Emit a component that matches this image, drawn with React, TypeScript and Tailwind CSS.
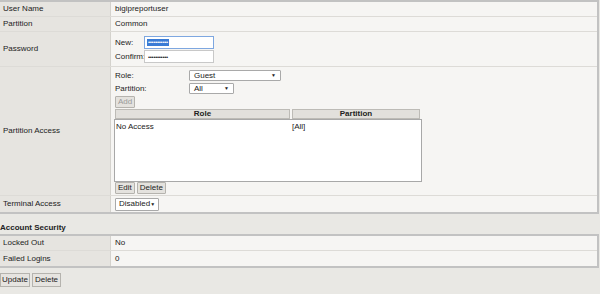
import React from "react";

const Sel = ({ w, label, h = "h-[11px]", pl = "pl-[4px]" }: { w: string; label: string; h?: string; pl?: string }) => (
  <div className={`${w} ${h} ${pl} bg-white border border-[#a9a9a9] flex items-center justify-between pr-[4px] rounded-[1px]`}>
    <span>{label}</span>
    <span className="text-[5px]">▼</span>
  </div>
);

const Btn = ({ label, disabled }: { label: string; disabled?: boolean }) => (
  <div className={`h-[12px] px-[2px] flex items-center border border-[#b5b3ae] bg-[#e4e2de] rounded-[1px] ${disabled ? "text-[#9a9a9a]" : ""}`}>{label}</div>
);

export default function App() {
  return (
    <div
      className="w-[600px] h-[294px] bg-[#e9e8e4] text-[#222] text-[8px] leading-none overflow-hidden"
      style={{ fontFamily: '"Liberation Sans", Arial, sans-serif' }}
    >
      <div className="w-[599px] border-t-2 border-r-2 border-b-2 border-[#c2c2c2]">
        {/* User Name */}
        <div className="flex h-[15px] border-b border-[#dddbd7]">
          <div className="w-[111px] bg-[#e6e4e0] border-r border-[#d4d2cd] flex items-center pl-[3px]">User Name</div>
          <div className="flex-1 bg-[#f6f5f3] flex items-center pl-[4px]">bigipreportuser</div>
        </div>
        {/* Partition */}
        <div className="flex h-[15px] border-b border-[#dddbd7]">
          <div className="w-[111px] bg-[#e6e4e0] border-r border-[#d4d2cd] flex items-center pl-[3px]">Partition</div>
          <div className="flex-1 bg-[#f6f5f3] flex items-center pl-[4px]">Common</div>
        </div>
        {/* Password */}
        <div className="flex h-[35px] border-b border-[#dddbd7]">
          <div className="w-[111px] bg-[#e6e4e0] border-r border-[#d4d2cd] flex items-center pl-[3px]">Password</div>
          <div className="flex-1 bg-[#f6f5f3] flex flex-col pl-[4px] pt-[4px] gap-[1px]">
            <div className="flex items-center h-[13px]">
              <span className="w-[29px]">New:</span>
              <div className="w-[70px] h-[13px] bg-white border border-[#7ea7e0] flex items-center pl-[2px]">
                <span className="bg-[#3a7bd5] text-white text-[6px] leading-[7px] tracking-[-0.3px] px-[1px]">•••••••••••</span>
              </div>
            </div>
            <div className="flex items-center h-[13px]">
              <span className="w-[29px]">Confirm:</span>
              <div className="w-[70px] h-[13px] bg-white border border-[#c8c8c8] flex items-center pl-[3px]">
                <span className="text-[6px] tracking-[-0.3px]">•••••••••••</span>
              </div>
            </div>
          </div>
        </div>
        {/* Partition Access */}
        <div className="flex h-[129px] border-b border-[#dddbd7]">
          <div className="w-[111px] bg-[#e6e4e0] border-r border-[#d4d2cd] flex items-center pl-[3px]">Partition Access</div>
          <div className="flex-1 bg-[#f6f5f3] flex flex-col pl-[3px] pt-[3px]">
            <div className="flex items-center h-[11px] pl-[1px]">
              <span className="w-[74px]">Role:</span>
              <Sel w="w-[92px]" label="Guest" />
            </div>
            <div className="flex items-center h-[11px] mt-[2px] pl-[1px]">
              <span className="w-[74px]">Partition:</span>
              <Sel w="w-[45px]" label="All" />
            </div>
            <div className="flex mt-[2px] pl-[1px]">
              <Btn label="Add" disabled />
            </div>
            <div className="flex w-[306px] pl-[1px] mt-[1px]">
              <div className="w-[175px] h-[10px] bg-[#e2e0dc] border border-[#bdbbb6] flex items-center justify-center font-bold">Role</div>
              <div className="w-[128px] h-[10px] ml-[2px] bg-[#e2e0dc] border border-[#bdbbb6] flex items-center justify-center font-bold">Partition</div>
            </div>
            <div className="w-[308px] h-[63px] bg-white border border-[#a8a8a8] flex pt-[3px]">
              <span className="w-[177px] pl-[1px]">No Access</span>
              <span>[All]</span>
            </div>
            <div className="flex gap-[2px] pl-[1px]">
              <Btn label="Edit" />
              <Btn label="Delete" />
            </div>
          </div>
        </div>
        {/* Terminal Access */}
        <div className="flex h-[16px]">
          <div className="w-[111px] bg-[#e6e4e0] border-r border-[#d4d2cd] flex items-center pl-[3px]">Terminal Access</div>
          <div className="flex-1 bg-[#f6f5f3] flex items-center pl-[4px]">
            <Sel w="w-[44px]" h="h-[13px]" pl="pl-[3px]" label="Disabled" />
          </div>
        </div>
      </div>

      <div className="h-[20px] flex items-end pb-[2px] font-bold">Account Security</div>

      <div className="w-[599px] border-t-2 border-r-2 border-b-2 border-[#c2c2c2]">
        <div className="flex h-[15px] border-b border-[#dddbd7]">
          <div className="w-[111px] bg-[#e6e4e0] border-r border-[#d4d2cd] flex items-center pl-[3px]">Locked Out</div>
          <div className="flex-1 bg-[#f6f5f3] flex items-center pl-[4px]">No</div>
        </div>
        <div className="flex h-[15px]">
          <div className="w-[111px] bg-[#e6e4e0] border-r border-[#d4d2cd] flex items-center pl-[3px]">Failed Logins</div>
          <div className="flex-1 bg-[#f6f5f3] flex items-center pl-[4px]">0</div>
        </div>
      </div>

      <div className="flex gap-[2px] mt-[5px]">
        <div className="h-[14px] w-[30px] flex items-center justify-center border border-[#b5b3ae] bg-[#e6e4e0]">Update</div>
        <div className="h-[14px] w-[29px] flex items-center justify-center border border-[#b5b3ae] bg-[#e6e4e0]">Delete</div>
      </div>
    </div>
  );
}
